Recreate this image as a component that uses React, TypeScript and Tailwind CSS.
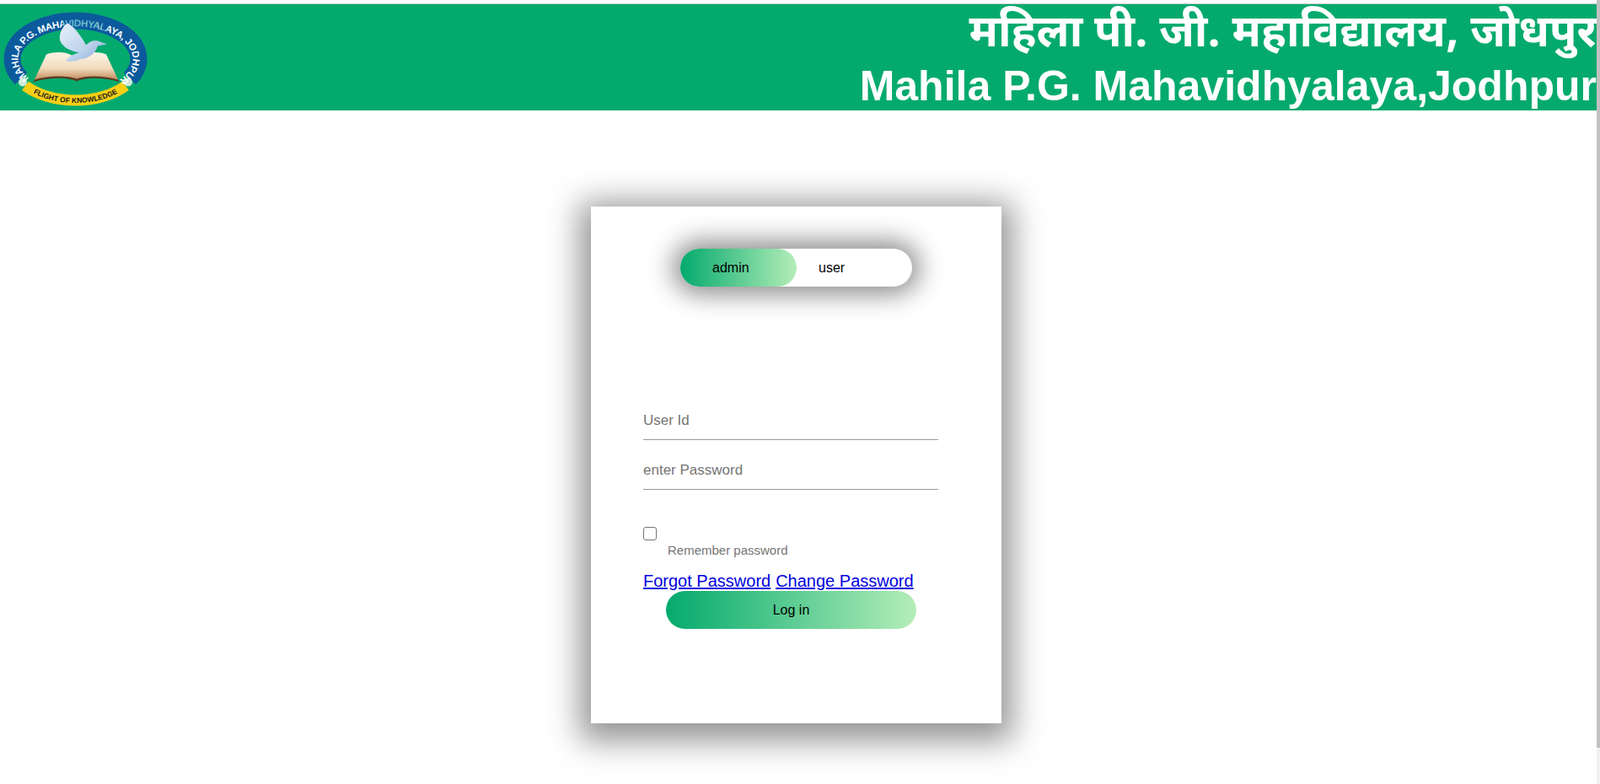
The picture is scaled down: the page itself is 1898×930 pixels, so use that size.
const FONT = "font-['Liberation_Sans',Arial,sans-serif]"

function Logo() {
    return (
        <svg viewBox="0 -1.5 180 126" className="h-[126px] w-[180px] shrink-0">
            <defs>
                <linearGradient id="page" x1="0" y1="0" x2="0" y2="1">
                    <stop offset="0" stopColor="#fbf3e6" />
                    <stop offset="0.55" stopColor="#f3dcbc" />
                    <stop offset="1" stopColor="#b97f52" />
                </linearGradient>
                <linearGradient id="dove" x1="0" y1="0" x2="1" y2="1">
                    <stop offset="0" stopColor="#e9f0fa" />
                    <stop offset="0.6" stopColor="#bcd2ec" />
                    <stop offset="1" stopColor="#7ea3d6" />
                </linearGradient>
                <linearGradient id="ringText" gradientUnits="userSpaceOnUse" x1="72" y1="0" x2="130" y2="0">
                    <stop offset="0" stopColor="#ffffff" />
                    <stop offset="0.08" stopColor="#5fb2cf" />
                    <stop offset="0.75" stopColor="#6fbccb" />
                    <stop offset="0.8" stopColor="#e8f3e8" />
                    <stop offset="0.86" stopColor="#2f95b8" />
                    <stop offset="1" stopColor="#ffffff" />
                </linearGradient>
                <path id="ringTop" d="M 34.5 86 A 68 38.5 0 1 1 144.5 86" />
                <path id="ringBottom" d="M 30 98.3 A 80 52 0 0 0 149 98.3" />
            </defs>
            <path d="M 25 86.7 A 75 45.5 0 1 1 154 86.7" fill="none" stroke="#0b5a9c" strokeWidth="20" />
            <path d="M 30 95.2 A 78 49 0 0 0 149 95.2" fill="none" stroke="#f6cf16" strokeWidth="13" />
            <circle cx="27" cy="91" r="5" fill="#cfe9dc" />
            <circle cx="152" cy="91" r="5" fill="#cfe9dc" />
            <text fill="url(#ringText)" fontFamily="Liberation Sans" fontWeight="700" fontSize="11.5">
                <textPath href="#ringTop" textLength="228">MAHILA P.G. MAHAVIDHYALAYA, JODHPUR</textPath>
            </text>
            <text fill="#1a1a1a" fontFamily="Liberation Sans" fontWeight="700" fontSize="8.5" textAnchor="middle">
                <textPath href="#ringBottom" startOffset="50%">FLIGHT OF KNOWLEDGE</textPath>
            </text>
            {/* book */}
            <path d="M40 90 L55 58 C 70 53, 85 56, 91 64 L 91 88 C 78 83, 58 83, 40 90 Z" fill="url(#page)" />
            <path d="M141 90 L126 58 C 112 53, 97 56, 91 64 L 91 88 C 104 83, 124 83, 141 90 Z" fill="url(#page)" />
            <path d="M39 91 C 58 85, 80 85, 91 90 C 102 85, 124 85, 142 91 L 140 88 C 122 83, 102 83, 91 87 C 80 83, 58 83, 41 88 Z" fill="#5a3a22" />
            {/* dove */}
            <path d="M80 21 C 90 26, 99 41, 102 47 C 106 42, 112 41, 116 42 L 127 46 L 116 48 C 113 58, 104 63, 94 64 C 88 67, 83 67, 78 66 C 82 59, 90 57, 94 56 C 84 54, 74 50, 71 41 C 70 33, 74 25, 80 21 Z" fill="url(#dove)" />
        </svg>
    )
}

export default function App() {
    return (
        <div className={`${FONT} relative h-[930px] overflow-hidden bg-white pt-[4px]`}>
            {/* Header */}
            <header className="flex h-[127px] w-[1894px] justify-between overflow-hidden border-t border-[#cccccc] bg-[#04aa6d] text-white">
                <Logo />
                <div className="flex flex-col items-end whitespace-nowrap font-bold">
                    <h1 className="font-['Noto_Sans_Devanagari','Noto_Sans','Liberation_Sans',sans-serif] text-[53px] leading-[76px]">
                        महिला पी. जी. महाविद्यालय, जोधपुर
                    </h1>
                    <h2 className="text-[50px] leading-[42px]">Mahila P.G. Mahavidhyalaya,Jodhpur</h2>
                </div>
            </header>

            {/* Login card */}
            <main className="ml-[701px] mt-[114px] h-[613px] w-[487px] bg-white pt-[50px] shadow-[0_8px_35px_13px_rgba(0,0,0,0.42)]">
                <div className="mx-auto flex h-[45px] w-[275px] items-center rounded-full bg-white text-[16px] text-black shadow-[0_0_30px_9px_rgba(0,0,0,0.45)]">
                    <div className="flex h-full w-[138px] items-center rounded-full bg-[linear-gradient(to_right,#04aa6d,#b4edb8)] pl-[38px]">
                        admin
                    </div>
                    <div className="ml-[26px]">user</div>
                </div>

                <form className="mt-[137px] pl-[62px]">
                    <input
                        type="text"
                        placeholder="User Id"
                        className="block h-[45px] w-[350px] border-b border-[#999] bg-transparent text-[17px] outline-none placeholder:text-[#757575]"
                    />
                    <input
                        type="password"
                        placeholder="enter Password"
                        className="mt-[14px] block h-[45px] w-[350px] border-b border-[#999] bg-transparent text-[17px] outline-none placeholder:text-[#757575]"
                    />
                    <input
                        type="checkbox"
                        className="mt-[44px] block h-4 w-4 appearance-none rounded-[3px] border border-[#767676] bg-white"
                    />
                    <label className="ml-[29px] mt-[2px] block text-[15px] leading-[20px] text-[#757575]">
                        Remember password
                    </label>
                    <div className="mt-[15px] flex gap-[6px] text-[20px] leading-[23px] text-[#0000dd]">
                        <a href="#" className="underline">Forgot Password</a>
                        <a href="#" className="underline">Change Password</a>
                    </div>
                    <button
                        type="button"
                        className="ml-[27px] block h-[45px] w-[297px] rounded-full bg-[linear-gradient(to_right,#04aa6d,#b4edb8)] text-[16px] text-black"
                    >
                        Log in
                    </button>
                </form>
            </main>

            {/* Scrollbar */}
            <div className="absolute right-0 top-0 h-full w-[4px] bg-[#f1f1f1]">
                <div className="h-[887px] w-full bg-[#c1c1c1]" />
            </div>
        </div>
    )
}
